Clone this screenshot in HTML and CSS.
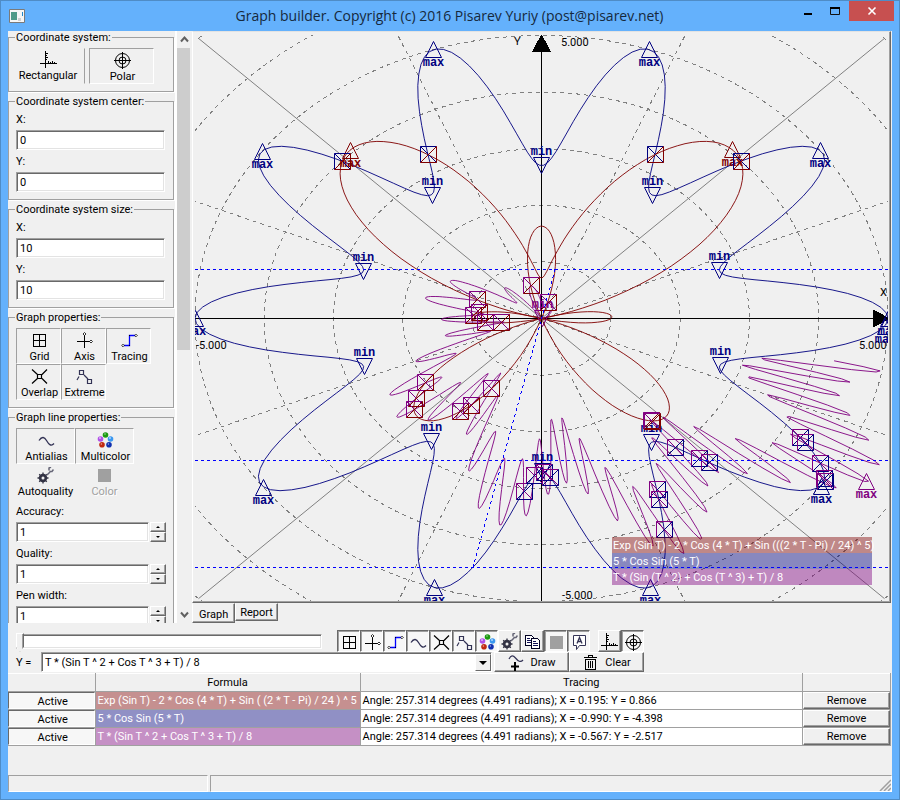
FILE: index.html
```
<!DOCTYPE html>
<html lang="en">
<head>
<meta charset="utf-8">
<title>Graph builder</title>
<link rel="stylesheet" href="styles.css">
</head>
<body>
<svg class="sprite" aria-hidden="true">
  <symbol id="i-rect" viewBox="0 0 17 17"><path d="M5.5 0v17M0 12.5h17M6 2.5h2M6 4.5h1M6 6.5h2M6 8.5h1M8.500 12v-2M10.500 12v-1M12.500 12v-2M14.500 12v-1" stroke="#000" fill="none" shape-rendering="crispEdges"/></symbol>
  <symbol id="i-polar" viewBox="0 0 17 17"><g stroke="#000" fill="none"><circle cx="8.500" cy="8.500" r="7"/><circle cx="8.500" cy="8.500" r="3.500"/><path d="M8.500 0v17M0 8.500h17" shape-rendering="crispEdges"/></g></symbol>
  <symbol id="i-grid" viewBox="0 0 17 17"><path d="M2.500 2.500h12v12h-12zM8.500 2v13M2 8.500h13" stroke="#000" fill="none" shape-rendering="crispEdges"/></symbol>
  <symbol id="i-axis" viewBox="0 0 17 17"><path d="M8.500 3v13M1 9.500h13" stroke="#000" shape-rendering="crispEdges"/><path d="M8.500 .500l1.500 1.500-1.500 1.500L7 2zM15 8l1.500 1.500L15 11l-1.500-1.500z" fill="#fff" stroke="#000" stroke-width=".8"/></symbol>
  <symbol id="i-trace" viewBox="0 0 17 17"><path d="M3 13.500h5.500v-10H14" fill="none" stroke="#0000ff" stroke-width="1.300"/><path d="M2 12.200l1.300 1.300L2 14.800.7 13.500zM15 2.200l1.300 1.300L15 4.800l-1.300-1.300z" fill="#fff" stroke="#000" stroke-width=".8"/><path d="M8 13h1v1H8zM8 3h1v1H8z"/></symbol>
  <symbol id="i-over" viewBox="0 0 17 17"><path d="M1 1.500l5.500 5M16 1.500L11 6.500M1 15.500l5.500-5M16 15.500l-5-5M6.500 6.500h4v4h-4z" fill="none" stroke="#000" stroke-width="1.200"/></symbol>
  <symbol id="i-ext" viewBox="0 0 17 17"><path d="M3.500 2.500h4v4h-4zM11.500 11.500h4v4h-4zM3 8.500L1 12M8 7l4 4" fill="none" stroke="#335" stroke-width="1.200"/></symbol>
  <symbol id="i-wave" viewBox="0 0 17 17"><path d="M1 8.500C4 4 6.500 5 8.500 8.500s4.500 6.500 7.500 3" fill="none" stroke="#335" stroke-width="1.300"/></symbol>
  <symbol id="i-multi" viewBox="0 0 17 17"><circle cx="8.500" cy="3" r="2.800" fill="#1a9a10"/><circle cx="3.500" cy="7" r="2.800" fill="#b050e8"/><circle cx="13.500" cy="7" r="2.800" fill="#3a98f0"/><circle cx="5" cy="12.800" r="2.800" fill="#c02810"/><circle cx="12" cy="12.800" r="2.800" fill="#1030b0"/><g fill="#fff" opacity=".6"><circle cx="8" cy="2" r=".8"/><circle cx="3" cy="6" r="1"/><circle cx="13" cy="6" r="1"/><circle cx="4.400" cy="12" r=".8"/><circle cx="11.400" cy="12" r=".7"/></g></symbol>
  <symbol id="i-gear" viewBox="0 0 17 17"><g fill="none" stroke="#334"><circle cx="6" cy="11" r="3" stroke-width="2.400"/><path d="M6 5.500v11M.500 11h11M2.200 7.200l7.600 7.600M2.200 14.800l7.600-7.600" stroke-width="1.300"/><path d="M10 8l3-3M12 3.500V1l2-1M16.500 2.500l-1.500 2h-2.500" stroke-width="1.500" stroke="#667"/></g><circle cx="6" cy="11" r="1.500" fill="#eee"/></symbol>
  <symbol id="i-color" viewBox="0 0 17 17"><path d="M2 2h13v13H2z" fill="#a0a0a0"/></symbol>
  <symbol id="i-copy" viewBox="0 0 17 17"><g fill="#fff" stroke="#002" shape-rendering="crispEdges"><path d="M1.500 2.500h6l2 2v8h-8z"/><path d="M7.500 5.500h6l2 2v8h-8z"/></g><path d="M3 5.500h3M3 7.500h4M3 9.500h4M9 8.500h3M9 10.500h5M9 12.500h5" stroke="#115" shape-rendering="crispEdges"/></symbol>
  <symbol id="i-note" viewBox="0 0 17 17"><path d="M2.500 1.500h12v10h-6l-3 4v-4h-3z" fill="#fff" stroke="#335"/><path d="M6 9.500L8.500 3.500 11 9.500M7 7.500h3" fill="none" stroke="#335" stroke-width="1.300"/></symbol>
  <symbol id="i-draw" viewBox="0 0 17 17"><path d="M1 5c2-4 4-4 6.500-1s5 5 7.500 2" fill="none" stroke="#335" stroke-width="1.200"/><path d="M7 8v9M3 12.500h8" stroke="#000" stroke-width="2"/></symbol>
  <symbol id="i-trash" viewBox="0 0 17 17"><path d="M2 3.500h13M6.500 3V1.500h4V3M3.500 5v10.500h10V5M3 5.500h11M6.500 7v7M8.500 7v7M10.500 7v7" fill="none" stroke="#000" shape-rendering="crispEdges"/></symbol>
</svg>

<div class="window">
  <header class="titlebar">
    <svg class="app-icon" viewBox="0 0 16 14"><path d="M.5.5h15v13H.5z" fill="#f6f6f6" stroke="#7a7a7a"/><path d="M2 3h6v8H2z" fill="#4f9a88"/><path d="M9 9h3v3H9z" fill="#d0d0d0"/><path d="M13 3h1v4h-1z" fill="#28c"/></svg>
    <h1>Graph builder. Copyright (c) 2016 Pisarev Yuriy (post@pisarev.net)</h1>
    <div class="win-buttons">
      <button class="win-btn" aria-label="Minimize"><svg viewBox="0 0 10 10"><path d="M1 7h8v2H1z"/></svg></button>
      <button class="win-btn" aria-label="Maximize"><svg viewBox="0 0 10 10"><path d="M.500 1.500h9v7h-9z" fill="none" stroke="#111"/><path d="M0 1h10v2H0z"/></svg></button>
      <button class="win-btn close" aria-label="Close"><svg viewBox="0 0 10 10"><path d="M1.500 1.500l7 7M8.500 1.500l-7 7" stroke="#fff" stroke-width="1.600"/></svg></button>
    </div>
  </header>

  <div class="client">
    <div class="workspace">
      <aside class="side">
        <form class="groups">
          <fieldset class="group">
            <legend>Coordinate system:</legend>
            <div class="tools tools-system">
              <button type="button" class="tool"><svg><use href="#i-rect"/></svg>Rectangular</button>
              <button type="button" class="tool on"><svg><use href="#i-polar"/></svg>Polar</button>
            </div>
          </fieldset>
          <fieldset class="group fields">
            <legend>Coordinate system center:</legend>
            <label for="cx">X:</label><input id="cx" value="0">
            <label for="cy">Y:</label><input id="cy" value="0">
          </fieldset>
          <fieldset class="group fields">
            <legend>Coordinate system size:</legend>
            <label for="sx">X:</label><input id="sx" value="10">
            <label for="sy">Y:</label><input id="sy" value="10">
          </fieldset>
          <fieldset class="group">
            <legend>Graph properties:</legend>
            <div class="tools tools-three">
              <button type="button" class="tool on"><svg><use href="#i-grid"/></svg>Grid</button>
              <button type="button" class="tool on"><svg><use href="#i-axis"/></svg>Axis</button>
              <button type="button" class="tool on"><svg><use href="#i-trace"/></svg>Tracing</button>
              <button type="button" class="tool on"><svg><use href="#i-over"/></svg>Overlap</button>
              <button type="button" class="tool on"><svg><use href="#i-ext"/></svg>Extreme</button>
            </div>
          </fieldset>
          <fieldset class="group fields">
            <legend>Graph line properties:</legend>
            <div class="tools tools-two">
              <button type="button" class="tool on"><svg><use href="#i-wave"/></svg>Antialias</button>
              <button type="button" class="tool on"><svg><use href="#i-multi"/></svg>Multicolor</button>
              <button type="button" class="tool"><svg><use href="#i-gear"/></svg>Autoquality</button>
              <button type="button" class="tool" disabled><svg><use href="#i-color"/></svg>Color</button>
            </div>
            <label for="acc">Accuracy:</label>
            <div class="spin"><input id="acc" value="1"><span class="arrows"><button type="button" class="up" aria-label="More"></button><button type="button" class="down" aria-label="Less"></button></span></div>
            <label for="qua">Quality:</label>
            <div class="spin"><input id="qua" value="1"><span class="arrows"><button type="button" class="up" aria-label="More"></button><button type="button" class="down" aria-label="Less"></button></span></div>
            <label for="pen">Pen width:</label>
            <div class="spin"><input id="pen" value="1"><span class="arrows"><button type="button" class="up" aria-label="More"></button><button type="button" class="down" aria-label="Less"></button></span></div>
          </fieldset>
        </form>
        <div class="scrollbar">
          <svg viewBox="0 0 15 17"><path d="M4 10.500l3.500-4 3.500 4" fill="none" stroke="#606060" stroke-width="2"/></svg>
          <div class="thumb"></div>
          <svg viewBox="0 0 15 17"><path d="M4 6.500l3.500 4 3.500-4" fill="none" stroke="#606060" stroke-width="2"/></svg>
        </div>
      </aside>

      <main class="book">
        <div class="page">
          <svg id="plot" class="plot" viewBox="195 35 693 566">
            <g id="grid" class="grid"></g>
            <g class="axes">
              <path d="M195 318.500H888M541.500 35V601"/>
              <path class="arrow" d="M533 51h17L541.500 35zM873 310v17L889 318.500z"/>
              <text x="514" y="45">Y</text><text x="561" y="46">5.000</text>
              <text x="880" y="296">X</text><text x="859" y="349">5.000</text>
              <text x="196" y="349">-5.000</text><text x="562" y="599">-5.000</text>
            </g>
            <g id="curves" class="curves"></g>
            <g id="marks" class="marks"></g>
            <g class="key">
              <path class="red" d="M612 537h260v16H612z"/>
              <path class="blue" d="M612 553h260v16H612z"/>
              <path class="purple" d="M612 569h260v16H612z"/>
              <text x="613" y="549">Exp (Sin T) - 2 * Cos (4 * T) + Sin (((2 * T - Pi) / 24) ^ 5)</text>
              <text x="613" y="565">5 * Cos Sin (5 * T)</text>
              <text x="613" y="581">T * (Sin (T ^ 2) + Cos (T ^ 3) + T) / 8</text>
            </g>
            <path class="trace" d="M195 269.500H888M195 460.500H888M195 567.500H888M555 269.500L473 567.500"/>
          </svg>
        </div>
        <nav class="tabs">
          <button class="tab current">Graph</button><button class="tab">Report</button>
        </nav>
      </main>
    </div>

    <div class="bar">
      <input type="range" class="slider" min="0" max="100" value="0" aria-label="Angle">
      <div class="bar-buttons">
        <button class="sq on" aria-label="Grid"><svg><use href="#i-grid"/></svg></button>
        <button class="sq on" aria-label="Axis"><svg><use href="#i-axis"/></svg></button>
        <button class="sq on" aria-label="Tracing"><svg><use href="#i-trace"/></svg></button>
        <button class="sq on" aria-label="Antialias"><svg><use href="#i-wave"/></svg></button>
        <button class="sq on" aria-label="Overlap"><svg><use href="#i-over"/></svg></button>
        <button class="sq on" aria-label="Extreme"><svg><use href="#i-ext"/></svg></button>
        <button class="sq on" aria-label="Multicolor"><svg><use href="#i-multi"/></svg></button>
        <button class="sq" aria-label="Autoquality"><svg><use href="#i-gear"/></svg></button>
        <button class="sq" aria-label="Copy"><svg><use href="#i-copy"/></svg></button>
        <button class="sq on" aria-label="Color"><svg><use href="#i-color"/></svg></button>
        <button class="sq on" aria-label="Legend"><svg><use href="#i-note"/></svg></button>
      </div>
      <div class="bar-buttons">
        <button class="sq" aria-label="Rectangular"><svg><use href="#i-rect"/></svg></button>
        <button class="sq on" aria-label="Polar"><svg><use href="#i-polar"/></svg></button>
      </div>
    </div>

    <div class="formula-row">
      <label for="formula">Y =</label>
      <div class="combo">
        <select id="formula"><option>T * (Sin T ^ 2 + Cos T ^ 3 + T) / 8</option></select>
        <span class="combo-arrow"></span>
      </div>
      <button class="push"><svg><use href="#i-draw"/></svg>Draw</button>
      <button class="push"><svg><use href="#i-trash"/></svg>Clear</button>
    </div>

    <table class="list">
      <colgroup><col class="c-active"><col class="c-formula"><col><col class="c-remove"></colgroup>
      <thead><tr><th></th><th>Formula</th><th>Tracing</th><th></th></tr></thead>
      <tbody>
        <tr><td class="cell-btn"><button class="active">Active</button></td><td class="f red">Exp (Sin T) - 2 * Cos (4 * T) + Sin ( (2 * T - Pi) / 24 ) ^ 5</td><td>Angle: 257.314 degrees (4.491 radians); X = 0.195: Y = 0.866</td><td class="cell-btn"><button class="remove">Remove</button></td></tr>
        <tr><td class="cell-btn"><button class="active">Active</button></td><td class="f blue">5 * Cos Sin (5 * T)</td><td>Angle: 257.314 degrees (4.491 radians); X = -0.990: Y = -4.398</td><td class="cell-btn"><button class="remove">Remove</button></td></tr>
        <tr><td class="cell-btn"><button class="active">Active</button></td><td class="f purple">T * (Sin T ^ 2 + Cos T ^ 3 + T) / 8</td><td>Angle: 257.314 degrees (4.491 radians); X = -0.567: Y = -2.517</td><td class="cell-btn"><button class="remove">Remove</button></td></tr>
      </tbody>
    </table>

    <footer class="status">
      <span class="panel-a"></span><span class="panel-b"><svg viewBox="0 0 12 12"><path d="M1 12L12 1M5 12l7-7M9 12l3-3" stroke="#a0a0a0" stroke-width="1.500"/></svg></span>
    </footer>
  </div>
</div>
<script src="graph.js"></script>
</body>
</html>
```
FILE: graph.js
```
const NS = "http://www.w3.org/2000/svg";
const CX = 541.5, CY = 318.5, UX = 69.3, UY = 56.6;
const RED = "#800000", BLUE = "#000080", PURPLE = "#800080";

function add(parent, tag, attrs, text) {
  const el = document.createElementNS(NS, tag);
  for (const k in attrs) el.setAttribute(k, attrs[k]);
  if (text) el.textContent = text;
  document.getElementById(parent).appendChild(el);
}

// Polar grid: one ring per unit, rays every 22.5 degrees
for (let r = 1; r <= 7; r++) {
  add("grid", "ellipse", { cx: CX, cy: CY, rx: r * UX, ry: r * UY, class: "dash" });
}
for (let k = 0; k < 8; k++) {
  const a = k * Math.PI / 8;
  if (k % 4 === 0) continue;
  const len = k % 2 ? 7.5 : 7;
  const dx = Math.cos(a) * len * UX, dy = Math.sin(a) * len * UY;
  add("grid", "line", { x1: CX - dx, y1: CY + dy, x2: CX + dx, y2: CY - dy, class: k % 2 ? "dash" : "solid" });
}

function curve(fn, end, step, color) {
  let d = "";
  for (let t = 0; t <= end; t += step) {
    const r = fn(t);
    d += (d ? "L" : "M") + (CX + r * Math.cos(t) * UX).toFixed(1) + " " + (CY - r * Math.sin(t) * UY).toFixed(1);
  }
  add("curves", "path", { d: d, stroke: color });
}
curve(t => Math.exp(Math.sin(t)) - 2 * Math.cos(4 * t) + Math.pow(Math.sin((2 * t - Math.PI) / 24), 5), 6.29, 0.02, RED);
curve(t => 5 * Math.cos(Math.sin(5 * t)), 6.29, 0.02, BLUE);
curve(t => t * (Math.sin(t * t) + Math.cos(t * t * t) + t) / 8, 6.114, 0.006, PURPLE);

// Extremes: x and top of each triangle
function max(x, y, color) {
  add("marks", "path", { d: `M${x} ${y}l8 16h-16z`, stroke: color });
  add("marks", "text", { x: x, y: y + 24, fill: color }, "max");
}
function min(x, y, color) {
  add("marks", "path", { d: `M${x} ${y + 16}l8 -16h-16z`, stroke: color });
  add("marks", "text", { x: x, y: y - 3, fill: color }, "min");
}
[[262.5, 143.5], [433.5, 41.5], [649.5, 41.5], [820.5, 142.5], [263.5, 479.5], [434.5, 579.5],
 [650.5, 579.5], [821.5, 478.5], [195.5, 310.5], [888.5, 310.5], [885.5, 318.5]].forEach(p => max(p[0], p[1], BLUE));
[[541.5, 157.5], [432.5, 187.5], [652.5, 187.5], [363.5, 263.5], [719.5, 262.5], [364.5, 358.5],
 [720.5, 357.5], [431.5, 433.5], [651.5, 434.5], [542.5, 463.5]].forEach(p => min(p[0], p[1], BLUE));
[[350.5, 142.5], [732.5, 141.5]].forEach(p => max(p[0], p[1], RED));
max(866.5, 473.5, PURPLE);
min(542.5, 310.5, PURPLE);

// Crossings of two curves: a box whose sides take both colours
function cross(x, y, a, b) {
  add("marks", "path", { d: `M${x + 8} ${y - 8}h-16v16M${x - 8} ${y - 8}l16 16`, stroke: a });
  add("marks", "path", { d: `M${x - 8} ${y + 8}h16v-16M${x - 8} ${y + 8}l16 -16`, stroke: b });
}
[[342.5, 161.5], [428.5, 154.5], [655.5, 154.5], [741.5, 161.5]].forEach(p => cross(p[0], p[1], BLUE, RED));
[[531.5, 285.5], [548.5, 302.5], [477.5, 299.5], [473.5, 315.5], [479.5, 312.5], [485.5, 322.5], [501.5, 322.5],
 [425.5, 382.5], [416.5, 398.5], [414.5, 409.5], [491.5, 388.5], [471.5, 405.5], [460.5, 411.5],
 [651.5, 420.5], [652.5, 421.5]].forEach(p => cross(p[0], p[1], PURPLE, RED));
[[524.5, 491.5], [534.5, 475.5], [544.5, 472.5], [550.5, 477.5], [675.5, 447.5], [699.5, 458.5], [709.5, 462.5],
 [800.5, 437.5], [805.5, 442.5], [820.5, 463.5], [824.5, 478.5], [825.5, 481.5], [657.5, 489.5],
 [659.5, 499.5], [664.5, 529.5]].forEach(p => cross(p[0], p[1], PURPLE, BLUE));
```
FILE: styles.css
```
* { box-sizing: border-box; }
body {
  margin: 0;
  font: 11px/13px Roboto, "Liberation Sans", sans-serif;
  color: #000;
}
button, input, select { font: inherit; color: inherit; margin: 0; padding: 0; border: 0; border-radius: 0; }
.sprite { position: absolute; width: 0; height: 0; }

.window {
  display: flex;
  flex-direction: column;
  height: 100vh;
  padding: 0 7px 7px;
  background: #64b1fc;
  border: 1px solid #4f8cc6;
}
.titlebar { display: flex; align-items: center; height: 30px; flex: none; margin-right: -2px; }
.app-icon { width: 16px; height: 14px; margin-left: 1px; }
.titlebar h1 {
  flex: 1;
  margin: 0 0 0 80px;
  text-align: center;
  font: 14px/20px "Open Sans", sans-serif;
  color: #16293c;
  white-space: nowrap;
}
.win-buttons { display: flex; align-self: flex-start; }
.win-btn { width: 27px; height: 20px; background: none; display: grid; place-items: center; }
.win-btn svg { width: 10px; height: 10px; }
.win-btn.close { width: 45px; margin-left: 1px; background: #c75050; }

.client { flex: 1; min-height: 0; display: flex; flex-direction: column; background: #f0f0f0; }
.workspace { flex: 1; min-height: 0; display: flex; gap: 2px; }

.side { display: flex; width: 182px; overflow: hidden; }
.groups { flex: 1; border-right: 2px solid #fff; }
.group {
  min-width: 0;
  margin: 0 1px 3px 0;
  padding: 0 7px 7px;
  border: 1px solid #a0a0a0;
  box-shadow: 1px 1px #fff;
}
.group legend { padding: 2px 1px 0; margin-left: -1px; line-height: 10px; white-space: nowrap; }
.fields { padding-top: 1px; }
.group > label { display: block; padding-top: 2px; line-height: 20px; }
.group input {
  display: block;
  width: 149px;
  height: 20px;
  padding: 0 3px;
  background: #fff;
  border: 1px solid;
  border-color: #a0a0a0 #fff #fff #a0a0a0;
  box-shadow: inset 1px 1px #696969, inset -1px -1px #e3e3e3;
}
.tools { display: grid; padding-top: 5px; }
.fields .tools { padding-top: 4px; }
.tools-system { grid-template-columns: 69px 65px; column-gap: 4px; }
.tools-three { grid-template-columns: repeat(3, 45px); }
.tools-two { grid-template-columns: 59px 59px; }
.tool {
  display: flex;
  flex-direction: column;
  align-items: center;
  justify-content: space-between;
  height: 36px;
  padding: 2px 5px 1px 0;
  background: none;
  border: 1px solid transparent;
}
.tool svg { width: 17px; height: 17px; flex: none; }
.tool.on { border-color: #a0a0a0 #fff #fff #a0a0a0; padding: 3px 0 0 2px; }
.tools-two .tool { padding-right: 0; }
.tools-system .tool:first-child { border-right-color: #a0a0a0; }
.tool:disabled { color: #a0a0a0; text-shadow: 1px 1px #fff; }
.spin { display: flex; gap: 1px; }
.spin input { width: 133px; }
.arrows { display: flex; flex-direction: column; width: 16px; }
.arrows button { display: grid; place-items: center; height: 10px; }
.arrows button, .sq, .push, .remove {
  background: #f0f0f0;
  border: 1px solid;
  border-color: #fff #696969 #696969 #fff;
  box-shadow: inset -1px -1px #a0a0a0;
}
.arrows button::after { content: ""; border: 2px solid transparent; }
.arrows .up::after { border-bottom-color: #000; border-top: 0; }
.arrows .down::after { border-top-color: #000; border-bottom: 0; }

.scrollbar { width: 15px; display: flex; flex-direction: column; justify-content: space-between; }
.scrollbar svg { width: 15px; height: 17px; flex: none; display: block; }
.thumb { height: 51%; margin-bottom: auto; background: #cdcdcd; }

.book { flex: 1; min-width: 0; display: flex; flex-direction: column; padding-right: 1px; }
.page {
  flex: 1;
  min-height: 0;
  padding: 3px 2px 1px;
  border: 1px solid;
  border-color: #e3e3e3 #696969 #696969 #fff;
  box-shadow: inset -1px -1px #a0a0a0;
}
.plot { display: block; width: 100%; height: 100%; }
.grid { fill: none; stroke: #808080; }
.grid .dash { stroke-dasharray: 4 4; shape-rendering: crispEdges; }
.axes { stroke: #000; fill: none; shape-rendering: crispEdges; }
.axes .arrow { fill: #000; }
.axes text { stroke: none; fill: #000; }
.curves { fill: none; stroke-width: 1; stroke-opacity: .9; }
.marks path { fill: none; }
.marks text { font: bold 12px "Liberation Mono", monospace; text-anchor: middle; }
.trace { fill: none; stroke: #00f; stroke-dasharray: 3 3; shape-rendering: crispEdges; }
.key path { fill-opacity: .43; }
.key .red { fill: #800000; }
.key .blue { fill: #000080; }
.key .purple { fill: #800080; }
.key text { fill: #fff; }

.tabs { display: flex; align-items: flex-start; height: 20px; flex: none; }
.tab {
  height: 18px;
  padding: 0 4px;
  background: #f0f0f0;
  border: 1px solid;
  border-color: transparent #696969 #696969 #fff;
  box-shadow: inset -1px -1px #a0a0a0;
}
.tab.current { height: 20px; padding: 2px 6px 0; }

.bar { display: flex; height: 22px; margin: 7px 0 0 8px; flex: none; }
.slider { appearance: none; width: 306px; height: 22px; margin-right: 15px; background: none; }
.slider::-webkit-slider-runnable-track {
  height: 15px;
  background: #fff;
  border: 1px solid;
  border-color: #a0a0a0 #fff #fff #a0a0a0;
  box-shadow: inset 1px 1px #696969, inset -1px -1px #e3e3e3;
}
.slider::-webkit-slider-thumb {
  appearance: none;
  width: 8px;
  height: 19px;
  margin: -2px 0 0 -1px;
  background: #f0f0f0;
  border: 1px solid;
  border-color: #fff #696969 #696969 #fff;
  box-shadow: inset -1px 0 #a0a0a0;
  clip-path: polygon(0 0, 100% 0, 100% 75%, 50% 100%, 0 75%);
}
.bar-buttons { display: flex; margin-right: 8px; }
.sq { width: 23px; height: 22px; display: grid; place-items: center; }
.sq svg { width: 17px; height: 17px; }
.sq.on {
  background: #f7f7f7;
  border-color: #696969 #fff #fff #696969;
  box-shadow: inset 1px 1px #a0a0a0;
  padding: 2px 0 0 1px;
}

.formula-row { display: flex; align-items: center; height: 20px; margin-left: 8px; flex: none; }
.formula-row label { width: 25px; }
.combo { position: relative; width: 451px; height: 20px; margin-right: 2px; }
.combo select {
  appearance: none;
  width: 100%;
  height: 20px;
  padding-left: 3px;
  background: #fff;
  border: 1px solid;
  border-color: #a0a0a0 #fff #fff #a0a0a0;
  box-shadow: inset 1px 1px #696969;
}
.combo-arrow {
  position: absolute;
  right: 1px;
  top: 2px;
  width: 16px;
  height: 17px;
  display: grid;
  place-items: center;
  background: #f0f0f0;
  border: 1px solid;
  border-color: #fff #696969 #696969 #fff;
  pointer-events: none;
}
.combo-arrow::after { content: ""; border: 4px solid transparent; border-top-color: #000; border-bottom: 0; }
.push { width: 75px; height: 20px; display: flex; align-items: center; justify-content: center; gap: 6px; }
.push svg { width: 17px; height: 17px; }

.list { width: calc(100% - 1px); margin-top: 1px; border-collapse: collapse; table-layout: fixed; flex: none; }
.c-active { width: 87px; }
.c-formula { width: 265px; }
.c-remove { width: 88px; }
.list th, .list td { height: 18px; padding: 0 2px; border-right: 1px solid #a0a0a0; border-bottom: 1px solid #a0a0a0; white-space: nowrap; overflow: hidden; }
.list th { font-weight: normal; border-top: 1px solid #fff; }
.list td { background: #fff; }
.list .f { color: #fff; }
.list .red { background: #c59090; }
.list .blue { background: #9090c5; }
.list .purple { background: #c590c5; }
.list .cell-btn { padding: 0; background: #f0f0f0; }
.list button { display: block; width: 100%; height: 17px; }
.active {
  background: #f7f7f7;
  border: 1px solid;
  border-color: #696969 #fff #fff #696969;
  padding: 2px 0 0 3px;
}

.status { display: flex; gap: 2px; height: 17px; margin-top: 29px; flex: none; }
.status span { border: 1px solid; border-color: #a0a0a0 #fff #fff #a0a0a0; }
.panel-a { width: 200px; }
.panel-b { flex: 1; display: flex; justify-content: flex-end; align-items: flex-end; }
.panel-b svg { width: 12px; height: 12px; }
```
